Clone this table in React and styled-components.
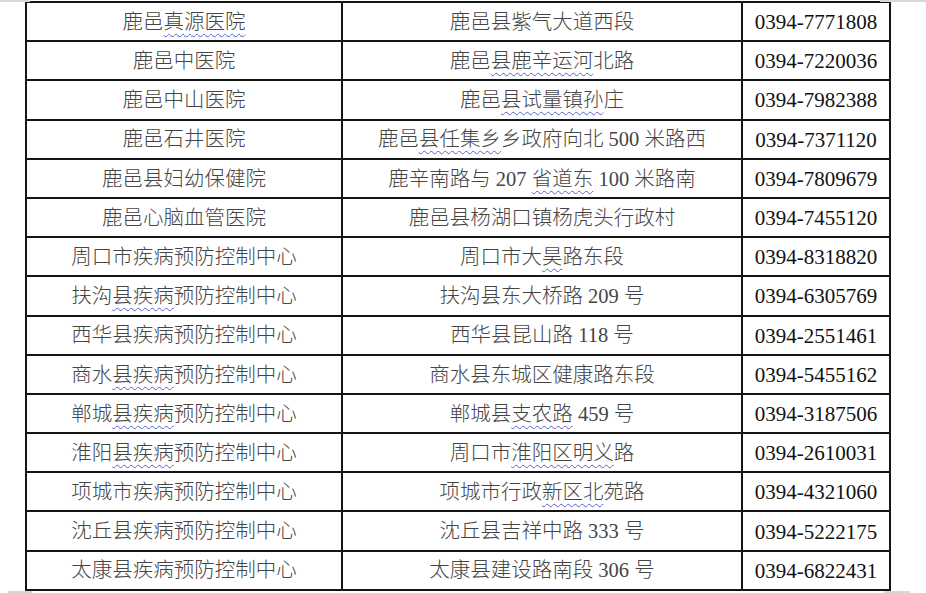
import styled, { createGlobalStyle } from 'styled-components';

const GlobalStyle = createGlobalStyle`
    html, body {
        margin: 0;
        padding: 0;
        background: #ffffff;
    }
`;

const Page = styled.div`
    position: relative;
    width: 926px;
    height: 593px;
    overflow: hidden;
    background: #ffffff;
`;

const Table = styled.div`
    display: grid;
    grid-template-columns: 316px 400px 148px;
    grid-auto-rows: 39.2px;
    width: max-content;
    margin: 1px 0 0 25px;
    border-top: 2px solid #151515;
    border-left: 2px solid #151515;
`;

const Cell = styled.div`
    box-sizing: border-box;
    display: flex;
    align-items: center;
    justify-content: center;
    border-right: 2px solid #151515;
    border-bottom: 2px solid #151515;
    padding-top: ${(props) => (props.$phone ? '2px' : '1px')};
    font-family: 'Liberation Serif', 'Noto Sans CJK SC', serif;
    font-size: ${(props) => (props.$phone ? '21px' : '20.5px')};
    font-weight: 300;
    color: ${(props) => (props.$phone ? '#111' : '#454545')};
    white-space: pre;
    line-height: 1;
`;

const Wavy = styled.span`
    text-decoration: underline wavy #5563cc;
    text-decoration-thickness: 1px;
    text-underline-offset: 4px;
`;

const Mark = styled.div`
    position: absolute;
    height: 2px;
    background: #d8d8d8;
    left: ${(props) => props.$x}px;
    top: ${(props) => props.$y}px;
    width: ${(props) => props.$w}px;
`;

// segments: plain strings, or [text] for the wavy spell-check mark
const rows = [
    [['鹿邑', ['真源医院']], ['鹿邑县紫气大道西段'], '0394-7771808'],
    [['鹿邑中医院'], ['鹿邑', ['县鹿辛运河'], '北路'], '0394-7220036'],
    [['鹿邑中山医院'], ['鹿邑', ['县试量镇孙'], '庄'], '0394-7982388'],
    [['鹿邑石井医院'], ['鹿邑', ['县任集乡'], '乡政府向北 500 米路西'], '0394-7371120'],
    [['鹿邑县妇幼保健院'], ['鹿辛南路与 207 ', ['省道东'], ' 100 米路南'], '0394-7809679'],
    [['鹿邑心脑血管医院'], ['鹿邑县杨湖口镇杨虎头行政村'], '0394-7455120'],
    [['周口市疾病预防控制中心'], ['周口市大', ['昊'], '路东段'], '0394-8318820'],
    [['扶沟', ['县疾病'], '预防控制中心'], ['扶沟县东大桥路 209 号'], '0394-6305769'],
    [['西华县疾病预防控制中心'], ['西华县昆山路 118 号'], '0394-2551461'],
    [['商水', ['县疾病'], '预防控制中心'], ['商水县东城区健康路东段'], '0394-5455162'],
    [['郸城', ['县疾病'], '预防控制中心'], ['郸城县', ['支农路'], ' 459 号'], '0394-3187506'],
    [['淮阳', ['县疾病'], '预防控制中心'], ['周口市', ['淮阳区'], ['明义'], '路'], '0394-2610031'],
    [['项城市疾病预防控制中心'], ['项城市行政', ['新区北'], '苑路'], '0394-4321060'],
    [['沈丘县疾病预防控制中心'], ['沈丘县吉祥中路 333 号'], '0394-5222175'],
    [['太康县疾病预防控制中心'], ['太康县建设路南段 306 号'], '0394-6822431'],
];

function Segments({ parts }) {
    return parts.map((part, i) =>
        Array.isArray(part) ? <Wavy key={i}>{part[0]}</Wavy> : <span key={i}>{part}</span>
    );
}

function App() {
    return (
        <Page>
            <GlobalStyle />
            <Table>
                {rows.map(([name, address, phone], i) => [
                    <Cell key={`n${i}`}>
                        <Segments parts={name} />
                    </Cell>,
                    <Cell key={`a${i}`}>
                        <Segments parts={address} />
                    </Cell>,
                    <Cell key={`p${i}`} $phone>
                        {phone}
                    </Cell>,
                ])}
            </Table>
            <Mark $x={0} $y={0} $w={30} />
            <Mark $x={880} $y={0} $w={46} />
            <Mark $x={8} $y={591} $w={24} />
            <Mark $x={884} $y={591} $w={26} />
        </Page>
    );
}

export default App;
